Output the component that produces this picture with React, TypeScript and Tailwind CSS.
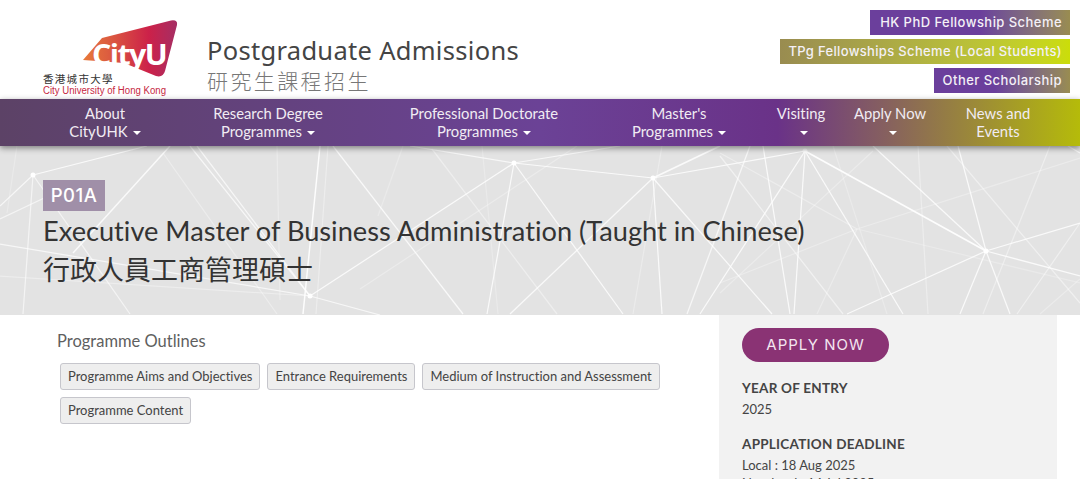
// CityUHK 대학원 입학 페이지 헤더 + 프로그램 상단
const LATO = "font-['Lato','Noto_Sans_CJK_TC',sans-serif]";

const navItems = [
  { w: 'w-[130px]', top: 'About', bottom: 'CityUHK', caret: true },
  { w: 'w-[196px]', top: 'Research Degree', bottom: 'Programmes', caret: true },
  { w: 'w-[236px]', top: 'Professional Doctorate', bottom: 'Programmes', caret: true },
  { w: 'w-[154px]', top: "Master's", bottom: 'Programmes', caret: true },
  { w: 'w-[90px]', top: 'Visiting', bottom: '', caret: true },
  { w: 'w-[88px]', top: 'Apply Now', bottom: '', caret: true },
  { w: 'w-[128px]', top: 'News and', bottom: 'Events', caret: false },
];

// [x1, y1, x2, y2, opacity, width]
const lines: number[][] = [
  [33, 175, 147, 146, 0.8, 1], [33, 175, 0, 206, 0.7, 1], [33, 175, 23, 314, 0.6, 1], [33, 175, 130, 314, 0.6, 1],
  [0, 219, 78, 182, 0.6, 1], [73, 253, 170, 146, 0.8, 1.2], [0, 244, 310, 296, 0.7, 1], [0, 276, 310, 296, 0.35, 1],
  [190, 146, 310, 296, 0.7, 1], [197, 146, 310, 296, 0.7, 1], [310, 296, 380, 315, 0.7, 1], [320, 146, 303, 314, 0.9, 1.2],
  [328, 146, 316, 314, 0.35, 1], [333, 146, 463, 314, 0.8, 1], [277, 146, 280, 300, 0.3, 1], [163, 153, 277, 314, 0.35, 1],
  [17, 146, 7, 213, 0.25, 1], [410, 146, 514, 163, 0.7, 1], [620, 146, 514, 163, 0.7, 1], [514, 163, 653, 178, 0.8, 1],
  [514, 163, 487, 314, 0.8, 1], [514, 163, 623, 314, 0.8, 1], [514, 163, 310, 296, 0.8, 1], [432, 149, 557, 314, 0.4, 1],
  [577, 146, 360, 289, 0.3, 1], [403, 146, 378, 216, 0.25, 1], [482, 146, 498, 314, 0.25, 1],
  [653, 178, 720, 146, 0.8, 1.4], [653, 178, 805, 151, 0.8, 1], [653, 178, 510, 314, 0.8, 1], [653, 178, 662, 314, 0.8, 1],
  [662, 146, 633, 314, 0.3, 1], [653, 178, 772, 314, 0.8, 1], [805, 151, 700, 314, 0.8, 1], [805, 151, 794, 314, 0.8, 1],
  [805, 151, 903, 314, 0.8, 1], [805, 151, 986, 251, 0.9, 1.4], [763, 146, 790, 314, 0.8, 1], [750, 146, 687, 314, 0.7, 1],
  [986, 251, 873, 146, 0.8, 1], [986, 251, 958, 146, 0.8, 1], [986, 251, 1080, 223, 0.8, 1], [986, 251, 1080, 276, 0.8, 1],
  [986, 251, 847, 314, 0.8, 1], [986, 251, 960, 314, 0.8, 1], [986, 251, 1010, 314, 0.8, 1], [947, 146, 1080, 303, 0.45, 1],
  [1050, 146, 983, 314, 0.4, 1], [1080, 158, 857, 229, 0.3, 1], [857, 229, 1080, 283, 0.25, 1], [857, 229, 817, 314, 0.3, 1],
  [857, 229, 720, 283, 0.3, 1], [857, 229, 720, 153, 0.35, 1], [873, 151, 720, 293, 0.3, 1], [918, 146, 928, 314, 0.35, 1],
  [1080, 223, 1017, 314, 0.45, 1], [1068, 146, 1080, 153, 0.7, 1], [1040, 314, 1080, 279, 0.3, 1], [833, 146, 887, 314, 0.25, 1],
  [720, 156, 843, 314, 0.5, 1],
];
const nodes = [[33, 175], [310, 296], [514, 163], [653, 178], [805, 151, 0.6], [986, 251]];

function Caret() {
  return <span className="inline-block w-0 h-0 ml-[5px] align-middle border-x-[4px] border-x-transparent border-t-[4px] border-t-white" />;
}

function Logo() {
  return (
    <svg width="160" height="84" viewBox="30 15 160 84" className="ml-[30px] mt-[15px] shrink-0">
      <defs>
        <linearGradient id="logoGrad" x1="0" y1="0" x2="1" y2="0">
          <stop offset="0" stopColor="#e8793a" />
          <stop offset="0.25" stopColor="#dd5f3f" />
          <stop offset="0.7" stopColor="#cc2149" />
          <stop offset="1" stopColor="#a52e64" />
        </linearGradient>
      </defs>
      <path d="M83 60 L102 38 L171 20.5 Q178 19.5 177 25 L165 71 Q163 78 156 76 L124 63 Z" fill="url(#logoGrad)" />
      <text x="92" y="65" fill="#fff" fontFamily="'Open Sans',sans-serif" fontWeight="700" fontSize="28" letterSpacing="-1.5" textLength="74" lengthAdjust="spacingAndGlyphs">CityU</text>
      <text x="43" y="83" fill="#333" fontFamily="'Noto Sans CJK TC',sans-serif" fontSize="10.5" letterSpacing="1.3">香港城市大學</text>
      <text x="43" y="94" fill="#c6283f" fontFamily="'Liberation Sans',sans-serif" fontSize="10" textLength="123" lengthAdjust="spacingAndGlyphs">City University of Hong Kong</text>
    </svg>
  );
}

export default function App() {
  return (
    <div className={`h-[479px] w-full overflow-hidden bg-white [font-variant-ligatures:none] ${LATO}`}>
      {/* 헤더 */}
      <header className="flex h-[99px]">
        <Logo />
        <div className="ml-[17px] pt-[32px]">
          <div className="font-['Noto_Sans',sans-serif] text-[25.5px] leading-[36px] text-[#444] tracking-[0.3px]">Postgraduate Admissions</div>
          <div className="font-['Noto_Sans_CJK_TC',sans-serif] font-light text-[21px] leading-[26px] -mt-[1px] tracking-[2.4px] text-[#777]">研究生課程招生</div>
        </div>
        <div className="ml-auto mr-[10px] pt-[10px] flex flex-col items-end gap-[4px] font-['Inter',sans-serif] font-medium text-[13px] tracking-[0.45px] text-[#f4f0f6]">
          <a className="h-[25px] leading-[25px] w-[200px] text-right pr-[8px] bg-gradient-to-r from-[#6b3f9c] from-55% to-[#998c50]">HK PhD Fellowship Scheme</a>
          <a className="h-[25px] leading-[25px] w-[290px] text-right pr-[8px] tracking-[0.33px] bg-gradient-to-r from-[#998c50] to-[#cbdd08]">TPg Fellowships Scheme (Local Students)</a>
          <a className="h-[25px] leading-[25px] w-[136px] text-right pr-[8px] bg-gradient-to-r from-[#6b3f9c] from-45% to-[#998c50]">Other Scholarship</a>
        </div>
      </header>

      {/* 메인 내비게이션 */}
      <nav className="relative z-10 flex h-[47px] pl-[40px] pt-[5px] text-[14.8px] leading-[18px] text-[#f1ecf3] shadow-[0_2px_6px_rgba(0,0,0,0.45)] bg-[linear-gradient(90deg,#5c4266_0%,#6b4296_50%,#6a3288_72%,#86605f_82%,#b5bb0a_100%)]">
        {navItems.map((item) => (
          <div key={item.top} className={`${item.w} text-center`}>
            <div>{item.top}</div>
            <div>
              {item.bottom}
              {item.caret && <Caret />}
            </div>
          </div>
        ))}
      </nav>

      {/* 프로그램 제목 */}
      <section className="relative h-[169px] bg-[#e3e3e3] pl-[43px] pt-[34px] overflow-hidden">
        <svg className="absolute inset-0" width="1080" height="169" viewBox="0 146 1080 169">
          {lines.map((l, i) => (
            <line key={i} x1={l[0]} y1={l[1]} x2={l[2]} y2={l[3]} stroke="#fff" strokeOpacity={l[4]} strokeWidth={l[5] * 1.25} />
          ))}
          {nodes.map((n, i) => (
            <circle key={i} cx={n[0]} cy={n[1]} r="2.5" fill="#fff" fillOpacity={n[2] ?? 1} />
          ))}
        </svg>
        <div className="relative">
          <div className="w-[62px] h-[31px] bg-[#a08fa8] font-['Inter',sans-serif] font-medium text-white text-[18.5px] tracking-[0.5px] leading-[31px] text-center">P01A</div>
          <h1 className="mt-[1px] text-[27.2px] leading-[38px] text-[#333]">Executive Master of Business Administration (Taught in Chinese)</h1>
          <div className="font-['Noto_Sans_CJK_TC',sans-serif] text-[27px] leading-[38px] text-[#333]">行政人員工商管理碩士</div>
        </div>
      </section>

      {/* 본문 */}
      <main className="flex">
        <div className="w-[719px] shrink-0 pl-[57px] pt-[16px]">
          <h2 className="text-[16.5px] leading-[20px] text-[#5f5f5f]">Programme Outlines</h2>
          <div className="mt-[12px] ml-[3px] flex flex-wrap gap-x-[7px] gap-y-[7px] w-[620px]">
            {['Programme Aims and Objectives', 'Entrance Requirements', 'Medium of Instruction and Assessment', 'Programme Content'].map((t) => (
              <button key={t} className="h-[27px] px-[7px] text-[12.98px] leading-[25px] text-[#444] bg-[#eee] border border-[#c6c6cc] rounded-[3px]">{t}</button>
            ))}
          </div>
        </div>
        <aside className="w-[338px] h-[200px] bg-[#f2f2f2] pl-[23px] pt-[13px] text-[13px] text-[#444]">
          <div className="w-[147px] h-[34px] rounded-full bg-[#8a3374] text-center font-['Inter',sans-serif] text-[15px] leading-[34px] tracking-[1px] text-[#f3e6f0]">APPLY NOW</div>
          <div className="mt-[16px] text-[13.5px] font-bold tracking-[0.25px] leading-[20px]">YEAR OF ENTRY</div>
          <div className="leading-[20px] mt-[1px]">2025</div>
          <div className="mt-[15px] text-[13.5px] font-bold tracking-[0.25px] leading-[20px]">APPLICATION DEADLINE</div>
          <div className="leading-[21px] mt-[1px]">Local : 18 Aug 2025</div>
          <div className="leading-[21px] -mt-[3px]">Non-local : 14 Jul 2025</div>
        </aside>
      </main>
    </div>
  );
}
